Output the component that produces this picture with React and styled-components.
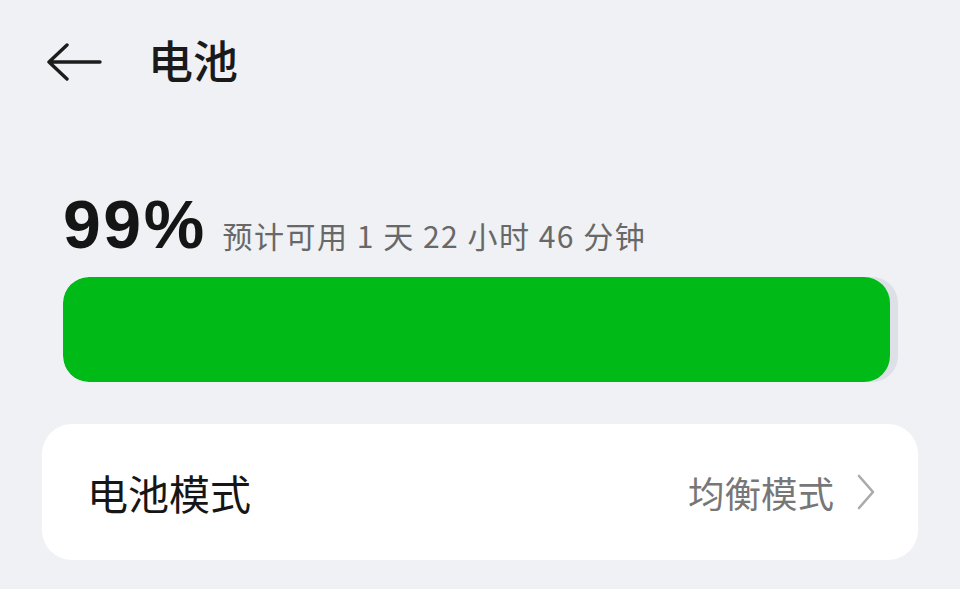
import styled, { createGlobalStyle } from "styled-components";

const GlobalStyle = createGlobalStyle`
  html, body {
    margin: 0;
    padding: 0;
    background: #eff1f4;
  }
  body {
    font-family: "Noto Sans CJK SC", "Noto Sans", sans-serif;
  }
`;

const Page = styled.div`
  width: 960px;
  height: 589px;
  overflow: hidden;
  background: #eff1f4;
  box-sizing: border-box;
`;

const Header = styled.header`
  display: flex;
  align-items: center;
  height: 60px;
  padding: 32px 0 0 46px;
`;

const BackButton = styled.button`
  display: flex;
  align-items: center;
  justify-content: center;
  width: 56px;
  height: 40px;
  padding: 0;
  border: none;
  background: none;
  color: #1c1c1c;
`;

const Title = styled.h1`
  margin: -6px 0 0 46px;
  font-size: 45px;
  font-weight: 500;
  color: #1a1a1a;
  line-height: 1;
`;

const Summary = styled.section`
  padding: 98px 0 0 63px;
`;

const LevelRow = styled.div`
  display: flex;
  align-items: baseline;
  gap: 16px;
  height: 60px;
`;

const Percent = styled.span`
  font-family: "Liberation Sans", Arial, sans-serif;
  font-weight: 700;
  font-size: 68px;
  line-height: 1;
  letter-spacing: 2.5px;
  color: #151515;
`;

const Estimate = styled.span`
  font-size: 30px;
  letter-spacing: 1.5px;
  color: #686868;
  line-height: 1;
`;

const Track = styled.div`
  margin-top: 27px;
  width: 835px;
  height: 105px;
  border-radius: 26px;
  background: #dde0e6;
  overflow: hidden;
`;

const Fill = styled.div`
  height: 100%;
  background: #00bb17;
  border-radius: 26px;
`;

const Card = styled.div`
  margin: 42px 0 0 42px;
  width: 876px;
  height: 136px;
  border-radius: 30px;
  background: #ffffff;
  display: flex;
  align-items: center;
  justify-content: space-between;
  padding: 0 42px 0 45px;
  box-sizing: border-box;
`;

const Label = styled.span`
  font-size: 41px;
  color: #161616;
`;

const Value = styled.span`
  display: flex;
  align-items: center;
  gap: 22px;
  font-size: 36.5px;
  color: #777777;
`;

const level = 99;

export default function App() {
  return (
    <Page>
      <GlobalStyle />
      <Header>
        <BackButton aria-label="返回">
          <svg width="56" height="38" viewBox="0 0 56 38" fill="none">
            <path
              d="M54 19H3M21 2L3 19l18 17"
              stroke="#1c1c1c"
              strokeWidth="3.4"
              strokeLinecap="round"
              strokeLinejoin="round"
            />
          </svg>
        </BackButton>
        <Title>电池</Title>
      </Header>
      <Summary>
        <LevelRow>
          <Percent>{level}%</Percent>
          <Estimate>预计可用 1 天 22 小时 46 分钟</Estimate>
        </LevelRow>
        <Track>
          <Fill style={{ width: `${level}%` }} />
        </Track>
      </Summary>
      <Card>
        <Label>电池模式</Label>
        <Value>
          均衡模式
          <svg width="20" height="36" viewBox="0 0 20 36" fill="none">
            <path
              d="M3 2l14 16L3 34"
              stroke="#aaaaaa"
              strokeWidth="2.6"
              strokeLinecap="round"
              strokeLinejoin="round"
            />
          </svg>
        </Value>
      </Card>
    </Page>
  );
}
